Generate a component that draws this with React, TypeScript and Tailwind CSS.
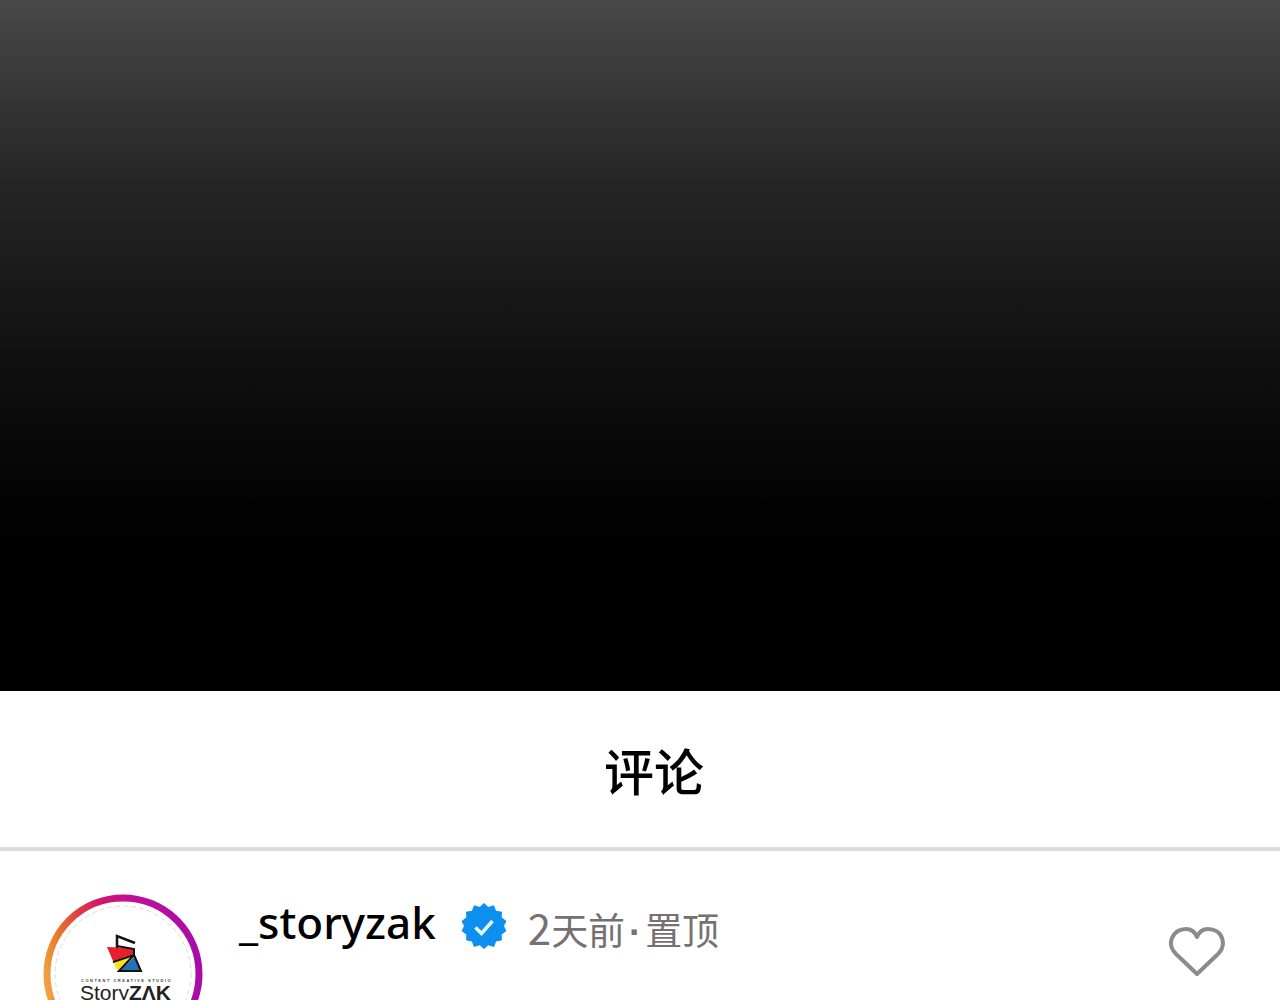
const post = {
  title: "评论",
  user: "_storyzak",
  age: "天前",
  pinned: "置顶",
};

function Avatar() {
  return (
    <svg viewBox="0 0 160 160" className="w-40 h-40 shrink-0" role="img" aria-label="StoryZAK">
      <defs>
        <linearGradient id="ring" x1="0" y1="0.55" x2="1" y2="0.35">
          <stop offset="0" stopColor="#f0a040" />
          <stop offset="0.12" stopColor="#e87c28" />
          <stop offset="0.28" stopColor="#de3e44" />
          <stop offset="0.45" stopColor="#d3126c" />
          <stop offset="0.65" stopColor="#c0109a" />
          <stop offset="1" stopColor="#a80ca8" />
        </linearGradient>
      </defs>
      <circle cx="80" cy="80" r="76" fill="#fff" stroke="url(#ring)" strokeWidth="7" />
      <circle cx="80" cy="80" r="68" fill="none" stroke="#dcdcdc" strokeWidth="1" strokeDasharray="5 3" />
      <g transform="translate(-43 -894)">
        <path d="M107 947 L134 948 V954 L113 961 Z" fill="#e5202b" />
        <path d="M113 962 L133 956 L118 971 Z" fill="#fbe122" />
        <path d="M134 957 L141 971 H120 Z" fill="#2272b8" />
        <path d="M117 948 V936 L135 943" fill="none" stroke="#111" strokeWidth="2.500" />
        <path d="M117 946 L134 949 V955 L113 962 M133 956 L119 971 H141 L134 955" fill="none" stroke="#111" strokeWidth="2" />
        <text x="81" y="982" fontSize="4" fontWeight="700" fill="#444" className="font-['Liberation_Sans'] tracking-[1.5px]">
          CONTENT CREATIVE STUDIO
        </text>
        <text x="80" y="1000" fontSize="21" fill="#222" className="font-['Liberation_Sans']">
          Story<tspan fontWeight="700">ZΛK</tspan>
        </text>
      </g>
    </svg>
  );
}

function Verified() {
  return (
    <svg viewBox="0 0 48 48" className="w-12 h-12 shrink-0" role="img" aria-label="verified">
      <path
        d="M24 1 L28.300 5.100 L33.900 3.200 L36.100 8.700 L42 9.700 L41.700 15.600 L46.400 19 L44 24 L46.400 29.100 L41.700 32.600 L41.900 38.300 L36.100 39.500 L34 45 L28.300 43.200 L24 47 L19.700 43.200 L14 45 L11.900 39.500 L6.100 38.300 L6.300 32.600 L1.600 29.100 L4 24 L1.600 19 L6.300 15.600 L6 9.700 L11.900 8.700 L14.100 3.200 L19.700 5.100 Z"
        fill="#0c8fee"
      />
      <path d="M15.500 25.500 L21.500 31.500 L32.500 19" fill="none" stroke="#e4fbff" strokeWidth="3.500" />
    </svg>
  );
}

export default function App() {
  return (
    <main className="h-screen overflow-hidden bg-white text-black font-['Noto_Sans_CJK_SC',sans-serif]">
      <div className="h-[691px] bg-[linear-gradient(to_bottom,#484848_0px,#353535_100px,#262626_180px,#171717_300px,#0c0c0c_400px,#020202_510px,#000_600px)]" />

      <header className="flex h-40 items-center justify-center border-b-4 border-[#dcdada] pl-7">
        <h1 className="text-[50px] leading-[60px] font-medium">{post.title}</h1>
      </header>

      <article className="flex items-start pt-[43px] pl-[43px] pr-[54px]">
        <Avatar />
        <div className="ml-9 flex h-16 flex-1 items-center">
          <a href="#user" className="pb-2 font-['Noto_Sans',sans-serif] text-[44px] leading-[56px] font-medium">
            {post.user}
          </a>
          <span className="ml-6 flex">
            <Verified />
          </span>
          <p className="ml-5 flex items-baseline pt-2 text-[37px] leading-[48px] text-[#767072]">
            <span className="text-[42px]">2</span>
            <span>{post.age}</span>
            <span className="w-5 text-center font-bold font-['Liberation_Sans']">·</span>
            <span>{post.pinned}</span>
          </p>
        </div>
        <button aria-label="like" className="mt-8">
          <svg viewBox="0 0 58 52" className="w-[58px] h-[52px]">
            <path
              d="M29 48 L8 28 C3 23 2 17 4 12 C7 5 13 3 18 3 C23 3 27 6 29 11 C31 6 35 3 40 3 C46 3 52 6 54 12 C56 18 54 24 50 28 Z"
              fill="none"
              stroke="#8b8b8b"
              strokeWidth="4"
              strokeLinejoin="round"
            />
          </svg>
        </button>
      </article>
    </main>
  );
}
